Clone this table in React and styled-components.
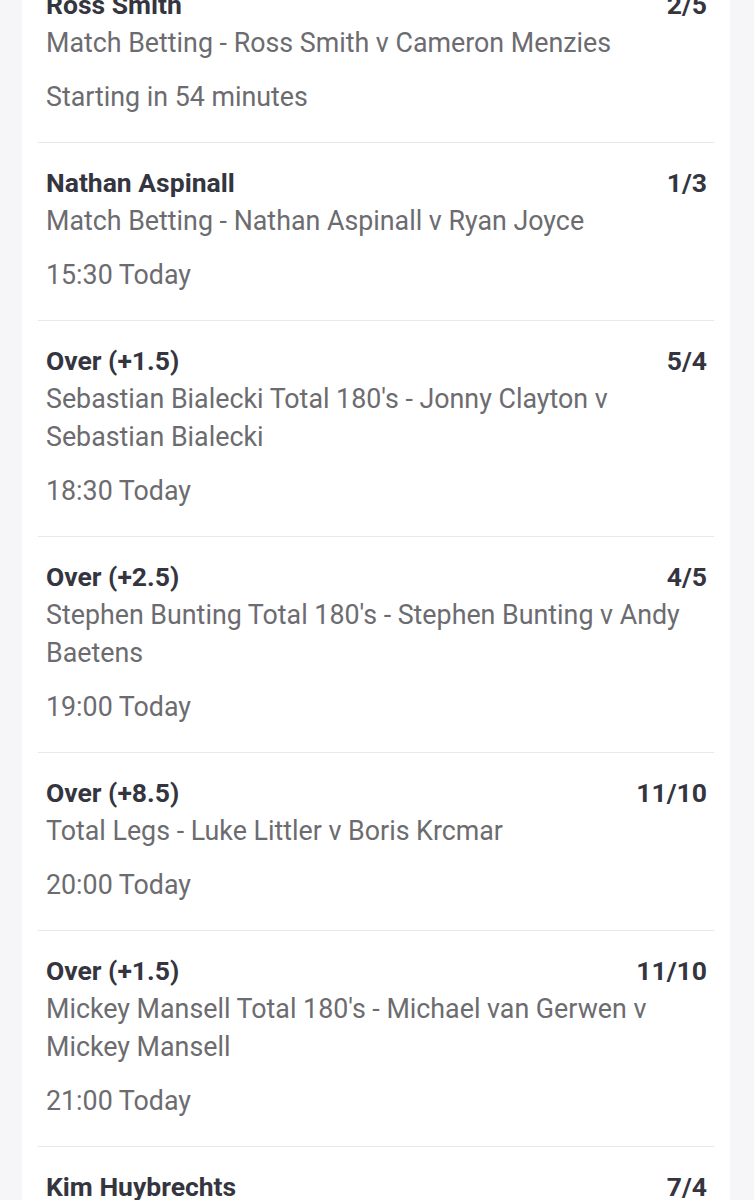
import React from 'react';
import styled, { createGlobalStyle } from 'styled-components';

const bets = [
  { selection: 'Ross Smith', odds: '2/5', market: 'Match Betting - Ross Smith v Cameron Menzies', time: 'Starting in 54 minutes' },
  { selection: 'Nathan Aspinall', odds: '1/3', market: 'Match Betting - Nathan Aspinall v Ryan Joyce', time: '15:30 Today' },
  { selection: 'Over (+1.5)', odds: '5/4', market: "Sebastian Bialecki Total 180's - Jonny Clayton v Sebastian Bialecki", time: '18:30 Today' },
  { selection: 'Over (+2.5)', odds: '4/5', market: "Stephen Bunting Total 180's - Stephen Bunting v Andy Baetens", time: '19:00 Today' },
  { selection: 'Over (+8.5)', odds: '11/10', market: 'Total Legs - Luke Littler v Boris Krcmar', time: '20:00 Today' },
  { selection: 'Over (+1.5)', odds: '11/10', market: "Mickey Mansell Total 180's - Michael van Gerwen v Mickey Mansell", time: '21:00 Today' },
  { selection: 'Kim Huybrechts', odds: '7/4', market: 'Match Betting - Kim Huybrechts v Luke Woodhouse', time: '21:30 Today' },
];

const App = () => (
  <>
    <GlobalStyle />
    <Page>
      <Card>
        {bets.map((bet, i) => (
          <Leg key={i}>
            <TopRow>
              <Selection>{bet.selection}</Selection>
              <Odds>{bet.odds}</Odds>
            </TopRow>
            <Market>{bet.market}</Market>
            <StartTime>{bet.time}</StartTime>
          </Leg>
        ))}
      </Card>
    </Page>
  </>
);

export default App;

const GlobalStyle = createGlobalStyle`
  html, body {
    margin: 0;
    padding: 0;
    background: #f6f6f8;
    overflow: hidden;
  }
  body {
    font-family: Roboto, "Noto Sans", sans-serif;
  }
`;

const Page = styled.div`
  height: 1200px;
  overflow: hidden;
  padding: 0 24px 0 22px;
`;

const Card = styled.div`
  background: #ffffff;
  margin-top: -35px;
  padding: 0 16px;
`;

const Leg = styled.div`
  padding: 21px 7px 26px 8px;
  border-bottom: 1.5px solid #e7e7ec;
`;

const TopRow = styled.div`
  display: flex;
  justify-content: space-between;
  align-items: center;
  line-height: 38px;
`;

const Selection = styled.span`
  font-size: 26.5px;
  font-weight: 700;
  color: #35353f;
`;

const Odds = styled.span`
  font-size: 26.5px;
  font-weight: 700;
  color: #35353f;
`;

const Market = styled.div`
  font-size: 26.8px;
  line-height: 38px;
  color: #6c6c70;
`;

const StartTime = styled.div`
  margin-top: 16px;
  font-size: 26.8px;
  line-height: 38px;
  color: #6c6c70;
`;
